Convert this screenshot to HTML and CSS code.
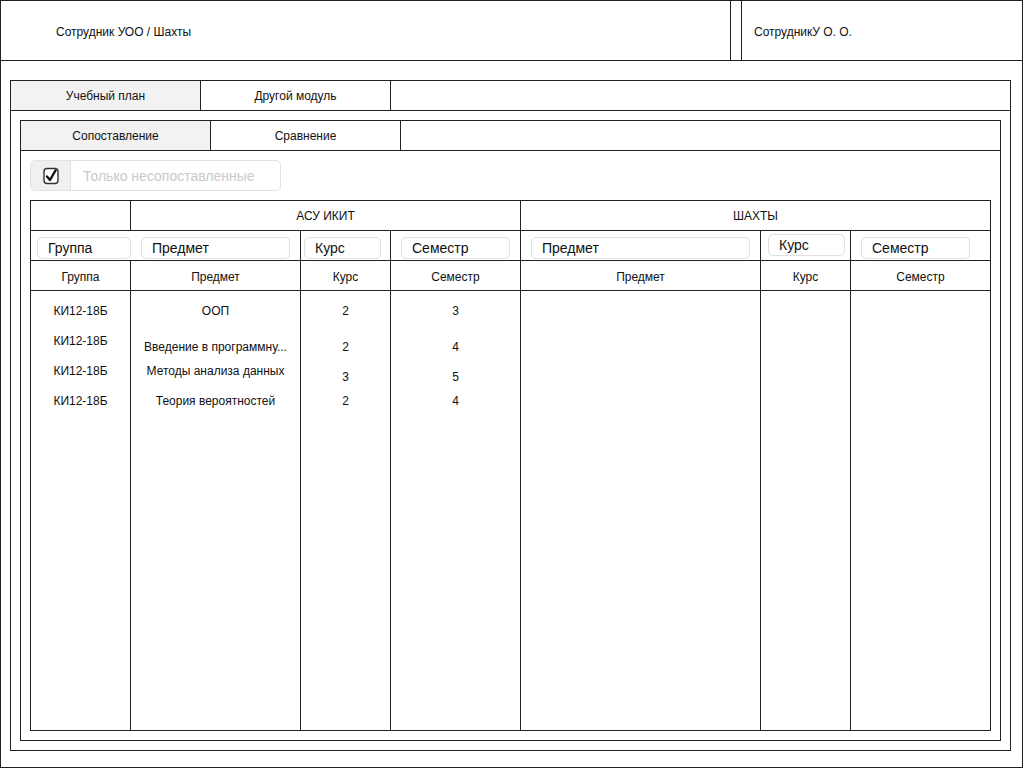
FILE: index.html
```html
<!DOCTYPE html>
<html lang="ru">
<head>
    <meta charset="UTF-8">
    <meta name="viewport" content="width=device-width, initial-scale=1.0">
    <title>Сопоставление учебных планов</title>
    <link rel="stylesheet" href="styles.css">
</head>
<body>
    <div class="screen">
        <header class="topbar">
            <div class="crumbs">Сотрудник УОО / Шахты</div>
            <div class="user">СотрудникУ О. О.</div>
        </header>

        <div class="workspace">
            <div class="tabs">
                <div class="tab active">Учебный план</div>
                <div class="tab">Другой модуль</div>
            </div>
            <div class="tab-panel">
                <div class="tabs">
                    <div class="tab active">Сопоставление</div>
                    <div class="tab">Сравнение</div>
                </div>
                <div class="tab-panel inner">
                    <label class="toggle">
                        <span class="toggle-box">
                            <svg width="16" height="18" viewBox="0 0 16 18">
                                <rect x="1" y="1.5" width="14" height="15" rx="3" fill="#fff" stroke="#333" stroke-width="1.4"/>
                                <path d="M4 9.5 L7 13 L12.5 3.5" fill="none" stroke="#111" stroke-width="2.4" stroke-linecap="round" stroke-linejoin="round"/>
                            </svg>
                        </span>
                        <span class="toggle-text">Только несопоставленные</span>
                    </label>

                    <div class="grid">
                        <div class="cell"></div>
                        <div class="cell title span3">АСУ ИКИТ</div>
                        <div class="cell title span3">ШАХТЫ</div>

                        <div class="cell filter open tight-left"><input class="field" value="Группа" readonly></div>
                        <div class="cell filter"><input class="field" value="Предмет" readonly></div>
                        <div class="cell filter narrow"><input class="field" value="Курс" readonly></div>
                        <div class="cell filter"><input class="field" value="Семестр" readonly></div>
                        <div class="cell filter"><input class="field" value="Предмет" readonly></div>
                        <div class="cell filter narrow raised"><input class="field" value="Курс" readonly></div>
                        <div class="cell filter wide-right"><input class="field" value="Семестр" readonly></div>

                        <div class="cell head">Группа</div>
                        <div class="cell head">Предмет</div>
                        <div class="cell head">Курс</div>
                        <div class="cell head">Семестр</div>
                        <div class="cell head">Предмет</div>
                        <div class="cell head">Курс</div>
                        <div class="cell head">Семестр</div>

                        <div class="cell body">
                            <div class="item">КИ12-18Б</div>
                            <div class="item">КИ12-18Б</div>
                            <div class="item">КИ12-18Б</div>
                            <div class="item">КИ12-18Б</div>
                        </div>
                        <div class="cell body">
                            <div class="item">ООП</div>
                            <div class="item low">Введение в программну...</div>
                            <div class="item">Методы анализа данных</div>
                            <div class="item">Теория вероятностей</div>
                        </div>
                        <div class="cell body">
                            <div class="item">2</div>
                            <div class="item low">2</div>
                            <div class="item low">3</div>
                            <div class="item">2</div>
                        </div>
                        <div class="cell body">
                            <div class="item">3</div>
                            <div class="item low">4</div>
                            <div class="item low">5</div>
                            <div class="item">4</div>
                        </div>
                        <div class="cell body"></div>
                        <div class="cell body"></div>
                        <div class="cell body"></div>
                    </div>
                </div>
            </div>
        </div>
    </div>
</body>
</html>
```

FILE: styles.css
```css
* {
    box-sizing: border-box;
}
body {
    margin: 0;
    font-family: "Liberation Sans", Arial, sans-serif;
    font-size: 12px;
    color: #111;
    background: #fff;
}
.screen {
    width: 1023px;
    height: 768px;
    border: 1px solid #222;
    display: flex;
    flex-direction: column;
}
.topbar {
    height: 60px;
    flex: none;
    display: flex;
    border-bottom: 1px solid #222;
}
.crumbs {
    flex: 1;
    display: flex;
    align-items: center;
    padding: 2px 0 0 55px;
    border-right: 1px solid #222;
}
.user {
    width: 281px;
    margin-left: 10px;
    display: flex;
    align-items: center;
    padding: 2px 0 0 12px;
    border-left: 1px solid #222;
}
.workspace {
    flex: 1;
    display: flex;
    flex-direction: column;
    padding: 19px 11px 16px 9px;
}
.tabs {
    height: 31px;
    flex: none;
    display: flex;
    border: 1px solid #222;
}
.tab {
    width: 190px;
    display: flex;
    align-items: center;
    justify-content: center;
    border-right: 1px solid #222;
    background: #fff;
}
.tab.active {
    background: #f2f2f2;
}
.tab-panel {
    flex: 1;
    display: flex;
    flex-direction: column;
    padding: 9px;
    border: 1px solid #222;
    border-top: none;
}
.toggle {
    width: 251px;
    height: 31px;
    flex: none;
    display: flex;
    border: 1px solid #e2e2e2;
    border-radius: 5px;
    overflow: hidden;
}
.toggle-box {
    width: 40px;
    display: flex;
    align-items: center;
    justify-content: center;
    background: #f0f0f0;
    border-right: 1px solid #e2e2e2;
}
.toggle-text {
    display: flex;
    align-items: center;
    padding: 1px 0 0 12px;
    font-size: 14px;
    color: #c9c9c9;
}
.grid {
    flex: 1;
    margin-top: 9px;
    display: grid;
    grid-template-columns: 100px 170px 90px 130px 240px 90px 140px;
    grid-template-rows: 30px 30px 30px 1fr;
    border-top: 1px solid #222;
    border-left: 1px solid #222;
}
.cell {
    border-right: 1px solid #222;
    border-bottom: 1px solid #222;
    display: flex;
    align-items: center;
    justify-content: center;
}
.span3 {
    grid-column: span 3;
}
.filter {
    padding: 4px 10px 0;
}
.filter.open {
    border-right: none;
}
.filter.tight-left {
    padding: 4px 0 0 6px;
}
.filter.narrow {
    padding: 4px 9px 0 3px;
}
.filter.raised {
    padding: 0 5px 2px 7px;
}
.filter.wide-right {
    padding: 4px 20px 0 10px;
}
.field {
    width: 100%;
    height: 22px;
    border: 1px solid #e0e0e0;
    border-radius: 5px;
    padding: 1px 0 0 10px;
    font-family: inherit;
    font-size: 14px;
    color: #111;
    background: #fff;
    outline: none;
}
.head {
    padding-top: 2px;
}
.body {
    flex-direction: column;
    justify-content: flex-start;
    align-items: stretch;
    padding-top: 5px;
}
.item {
    height: 30px;
    display: flex;
    align-items: center;
    justify-content: center;
}
.item.low {
    align-items: flex-end;
    padding-bottom: 2px;
}
```
